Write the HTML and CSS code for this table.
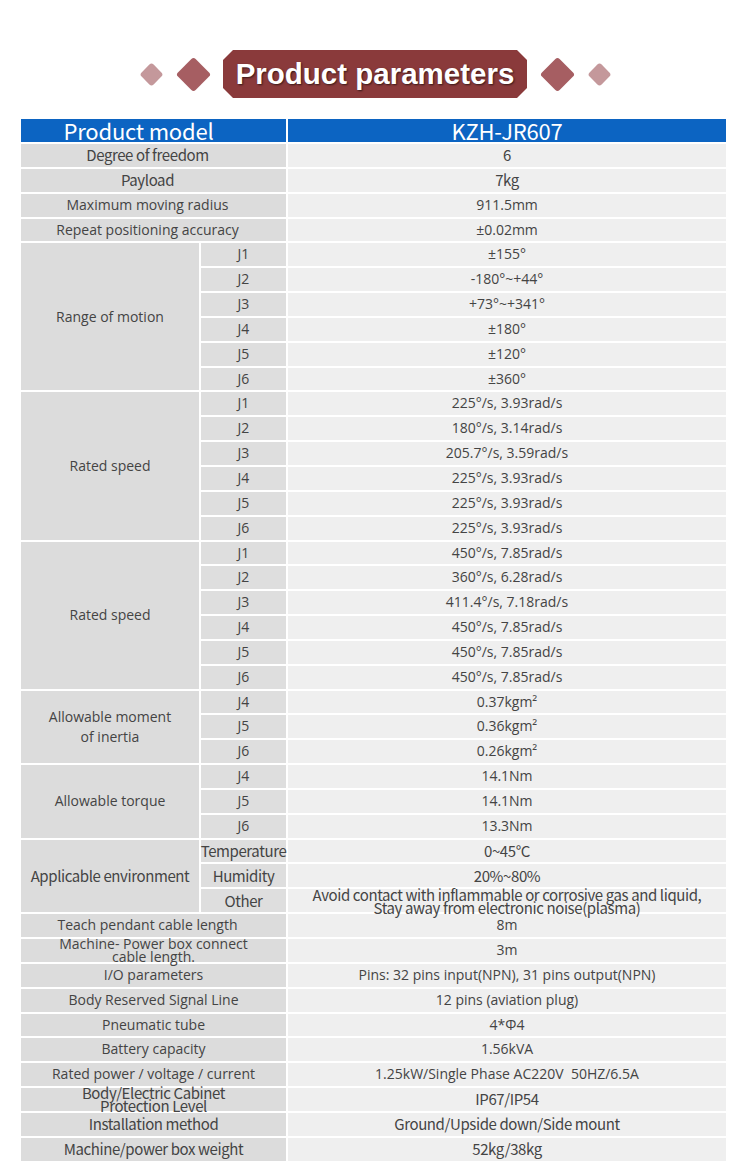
FILE: index.html
```html
<!DOCTYPE html>
<html>
<head>
<meta charset="utf-8">
<link rel="stylesheet" href="styles.css">
</head>
<body>
<div class="title-bar">
  <span class="dw"><span class="dm sm"></span></span>
  <span class="dw big"><span class="dm bg"></span></span>
  <div class="banner"><h1>Product parameters</h1></div>
  <span class="dw big"><span class="dm bg"></span></span>
  <span class="dw"><span class="dm sm"></span></span>
</div>

<div class="spec">
  <div class="hd c2 s off-lg">Product model</div>
  <div class="hd s">KZH-JR607</div>

  <div class="lb c2 s off">Degree of freedom</div><div class="vl s">6</div>
  <div class="lb c2 s off">Payload</div><div class="vl s">7kg</div>
  <div class="lb c2 off">Maximum moving radius</div><div class="vl">911.5mm</div>
  <div class="lb c2 off">Repeat positioning accuracy</div><div class="vl">±0.02mm</div>

  <div class="lb r6">Range of motion</div>
  <div class="sb">J1</div><div class="vl">±155°</div>
  <div class="sb">J2</div><div class="vl">-180°~+44°</div>
  <div class="sb">J3</div><div class="vl">+73°~+341°</div>
  <div class="sb">J4</div><div class="vl">±180°</div>
  <div class="sb">J5</div><div class="vl">±120°</div>
  <div class="sb">J6</div><div class="vl">±360°</div>

  <div class="lb r6">Rated speed</div>
  <div class="sb">J1</div><div class="vl">225°/s, 3.93rad/s</div>
  <div class="sb">J2</div><div class="vl">180°/s, 3.14rad/s</div>
  <div class="sb">J3</div><div class="vl">205.7°/s, 3.59rad/s</div>
  <div class="sb">J4</div><div class="vl">225°/s, 3.93rad/s</div>
  <div class="sb">J5</div><div class="vl">225°/s, 3.93rad/s</div>
  <div class="sb">J6</div><div class="vl">225°/s, 3.93rad/s</div>

  <div class="lb r6">Rated speed</div>
  <div class="sb">J1</div><div class="vl">450°/s, 7.85rad/s</div>
  <div class="sb">J2</div><div class="vl">360°/s, 6.28rad/s</div>
  <div class="sb">J3</div><div class="vl">411.4°/s, 7.18rad/s</div>
  <div class="sb">J4</div><div class="vl">450°/s, 7.85rad/s</div>
  <div class="sb">J5</div><div class="vl">450°/s, 7.85rad/s</div>
  <div class="sb">J6</div><div class="vl">450°/s, 7.85rad/s</div>

  <div class="lb r3 tall">Allowable moment<br>of inertia</div>
  <div class="sb">J4</div><div class="vl">0.37kgm²</div>
  <div class="sb">J5</div><div class="vl">0.36kgm²</div>
  <div class="sb">J6</div><div class="vl">0.26kgm²</div>

  <div class="lb r3">Allowable torque</div>
  <div class="sb">J4</div><div class="vl">14.1Nm</div>
  <div class="sb">J5</div><div class="vl">14.1Nm</div>
  <div class="sb">J6</div><div class="vl">13.3Nm</div>

  <div class="lb r3 s">Applicable environment</div>
  <div class="sb s">Temperature</div><div class="vl s">0~45°C</div>
  <div class="sb s">Humidity</div><div class="vl s">20%~80%</div>
  <div class="sb s">Other</div><div class="vl s tight">Avoid contact with inflammable or corrosive gas and liquid,<br>Stay away from electronic noise(plasma)</div>

  <div class="lb c2 off">Teach pendant cable length</div><div class="vl">8m</div>
  <div class="lb c2 tight">Machine- Power box connect<br>cable length.</div><div class="vl">3m</div>
  <div class="lb c2">I/O parameters</div><div class="vl">Pins: 32 pins input(NPN), 31 pins output(NPN)</div>
  <div class="lb c2">Body Reserved Signal Line</div><div class="vl">12 pins (aviation plug)</div>
  <div class="lb c2">Pneumatic tube</div><div class="vl">4*Φ4</div>
  <div class="lb c2">Battery capacity</div><div class="vl">1.56kVA</div>
  <div class="lb c2">Rated power / voltage / current</div><div class="vl">1.25kW/Single Phase AC220V&nbsp; 50HZ/6.5A</div>
  <div class="lb c2 s tight">Body/Electric Cabinet<br>Protection Level</div><div class="vl s">IP67/IP54</div>
  <div class="lb c2 s">Installation method</div><div class="vl s">Ground/Upside down/Side mount</div>
  <div class="lb c2 s">Machine/power box weight</div><div class="vl s">52kg/38kg</div>
</div>
</body>
</html>
```

FILE: styles.css
```css
html, body {
  margin: 0;
  padding: 0;
  background: #ffffff;
}

body {
  width: 750px;
  font-family: "Open Sans", "Liberation Sans", sans-serif;
  color: #444444;
}

.title-bar {
  display: flex;
  justify-content: center;
  align-items: center;
  gap: 13px;
  padding-top: 50px;
}

.dw {
  width: 24px;
  height: 24px;
  display: flex;
  align-items: center;
  justify-content: center;
}

.dw.big {
  width: 34px;
  height: 34px;
}

.dm {
  display: block;
  transform: rotate(45deg);
  border-radius: 3px;
}

.dm.sm {
  width: 17px;
  height: 17px;
  background: #c4989b;
}

.dm.bg {
  width: 25px;
  height: 25px;
  background: #a65e62;
}

.banner {
  width: 304px;
  height: 48px;
  background: #8a3a3b;
  clip-path: polygon(10px 0, 294px 0, 304px 10px, 304px 38px, 294px 48px, 10px 48px, 0 38px, 0 10px);
  display: flex;
  align-items: center;
  justify-content: center;
}

.banner h1 {
  margin: 0;
  font-family: "Liberation Sans", Arial, sans-serif;
  font-weight: bold;
  font-size: 29.5px;
  color: #ffffff;
  text-shadow: 1px 1px 2px rgba(0, 0, 0, 0.6);
}

.spec {
  margin: 21px 0 0 21px;
  width: 705px;
  display: grid;
  grid-template-columns: 178px 85px 438px;
  grid-template-rows: 23px;
  grid-auto-rows: 22.85px;
  gap: 2px;
  font-size: 14px;
}

.spec > div {
  display: flex;
  align-items: center;
  justify-content: center;
  text-align: center;
  white-space: nowrap;
  line-height: 1.2;
}

.hd {
  background: #0c64c2;
  color: #ffffff;
}

.spec > .hd.s {
  font-size: 22px;
  letter-spacing: -0.2px;
}

.lb {
  background: #dcdcdc;
}

.sb {
  background: #dedede;
}

.vl {
  background: #efefef;
}

.c2 {
  grid-column: span 2;
}

.r6 {
  grid-row: span 6;
}

.r3 {
  grid-row: span 3;
}

.spec > .off {
  padding-right: 12px;
}

.spec > .off-lg {
  padding-right: 30px;
}

.spec > .s {
  font-family: "Noto Sans CJK SC", "Open Sans", sans-serif;
  font-size: 15px;
  letter-spacing: -0.4px;
}

.spec > .tight {
  line-height: 13px;
  z-index: 1;
}

.spec > .tall {
  line-height: 20px;
}
```
